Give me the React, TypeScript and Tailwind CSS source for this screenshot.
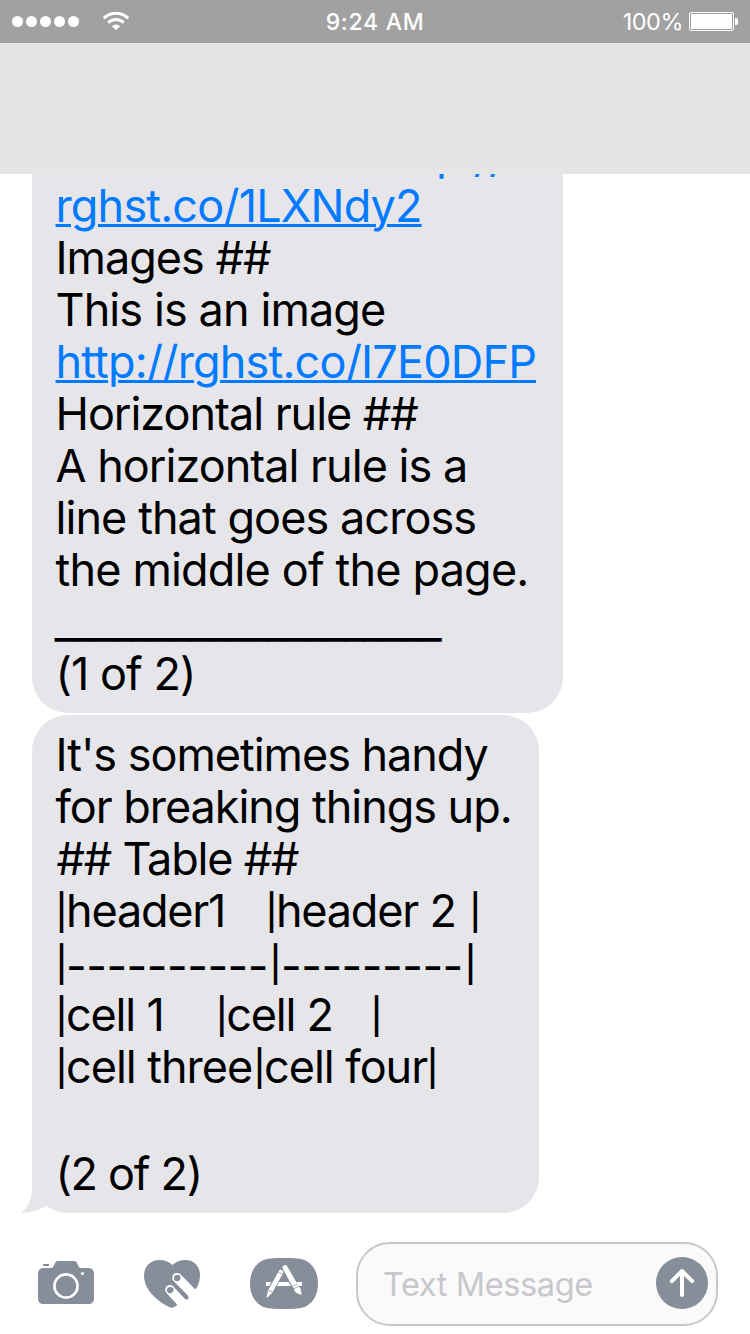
import type { ReactNode } from "react";

function Line({ children, tracking = "" }: { children?: ReactNode; tracking?: string }) {
  return <div className={`h-[52px] whitespace-pre ${tracking}`}>{children}</div>;
}

function Bar() {
  return <span className="inline-block w-[11.5px] align-[2px] text-[35px] font-medium leading-none tracking-normal">|</span>;
}

function Cell({ children, className }: { children: ReactNode; className: string }) {
  return (
    <span className={`inline-block whitespace-pre ${className}`}>
      <Bar />
      {children}
    </span>
  );
}

function StatusBar() {
  return (
    <header className="grid h-[43px] shrink-0 grid-cols-[1fr_auto_1fr] items-center bg-[#a1a1a1] text-white">
      <div className="flex items-center pl-3">
        <div className="flex gap-[3px]">
          {[0, 1, 2, 3, 4].map((i) => (
            <span key={i} className="size-[11px] rounded-full bg-white" />
          ))}
        </div>
        <svg className="ml-[23px] h-[20px] w-[28px]" viewBox="0 0 28 20" fill="none" stroke="#fff">
          <path d="M1.800 6.300a17.500 17.500 0 0 1 24.400 0" strokeWidth="3" />
          <path d="M6.200 10.700a11.200 11.200 0 0 1 15.600 0" strokeWidth="3" />
          <path d="M14 18.300 9.800 14.200a6 6 0 0 1 8.400 0Z" fill="#fff" stroke="none" />
        </svg>
      </div>
      <span className="pt-[2px] text-[23px] font-medium leading-[41px] tracking-[0.7px]">9:24 AM</span>
      <div className="flex items-center justify-end pr-3">
        <span className="mr-[6px] text-[23.5px] leading-[43px] tracking-[-0.5px]">100%</span>
        <div className="h-[19px] w-[45px] rounded-[2px] border border-white p-px">
          <div className="h-full w-full bg-white" />
        </div>
        <span className="ml-px h-[7px] w-[3px] rounded-r-[2px] bg-white" />
      </div>
    </header>
  );
}

function CameraIcon() {
  return (
    <svg className="h-[43px] w-[56px]" viewBox="0 0 56 43">
      <path
        fill="#868e99"
        d="M6 7h7c1.500 0 2-.6 2.600-1.900l1.200-2.500C17.700.6 18.700 0 20.500 0h15c1.800 0 2.900.6 3.700 2.600l1.200 2.500C41 6.400 41.500 7 43 7h7c4 0 6 2 6 6v24c0 4-2 6-6 6H6c-4 0-6-2-6-6V13c0-4 2-6 6-6Z"
      />
      <rect x="5" y="3" width="6" height="2" rx=".6" fill="#868e99" />
      <circle cx="28" cy="25" r="11.600" fill="none" stroke="#fff" strokeWidth="2.600" />
      <circle cx="44.500" cy="12.500" r="1.600" fill="#fff" />
    </svg>
  );
}

function HeartIcon() {
  return (
    <svg className="h-[48px] w-[56px]" viewBox="14 20 56 48">
      <path
        fill="#868e99"
        d="M42.500 25C39 21.500 34.500 20 29.500 20 20.500 20 14 26.500 14 35.500 14 50 27 60.500 39 67c2 1.100 3.900 1 5.500 0l3.500-2.500 9-6.500 9.500-10C69 44 70 39.500 70 35 70 26 63.500 20 55.500 20c-5 0-9.500 1.500-13 5Z"
      />
      <g stroke="#fff" strokeWidth="9.600" strokeLinecap="round">
        <path d="m47 37.700 24 24.500" />
        <path d="m40 49.800 18 19.500" />
      </g>
      <path d="m45.600 46.500 11.300 11.400" stroke="#868e99" strokeWidth="3.200" strokeLinecap="round" />
      <path d="M47.500 34.800c-2.200 0-3.600 1.300-3.600 3.200 0 2 1.200 3.200 2.900 3.200 2.400 0 3.700-1.600 3.700-3.500 0-1.700-1.200-2.900-3-2.900Z" fill="#868e99" />
      <path d="M40.400 46.900c-2.200 0-3.600 1.300-3.600 3.200 0 2 1.200 3.200 2.900 3.200 2.400 0 4-1.600 4-3.500 0-1.700-1.500-2.900-3.300-2.900Z" fill="#868e99" />
    </svg>
  );
}

function AppsIcon() {
  return (
    <svg className="h-[51px] w-[68px]" viewBox="0 0 68 51">
      <path
        fill="#868e99"
        d="M34 0c11 0 17 .5 21.500 2.500C63.500 6.500 68 15 68 25.500s-4.500 19-12.500 23C51 50.500 45 51 34 51s-17-.5-21.500-2.500C4.500 44.500 0 36 0 25.500s4.500-19 12.500-23C17 .5 23 0 34 0Z"
      />
      <path d="M16 24h36v4H16z" fill="#fff" />
      <path d="M31 14 19.500 34M35 10.500 48 34" stroke="#868e99" strokeWidth="6.600" />
      <g transform="translate(31.300 13.500) rotate(29)" fill="#fff">
        <path d="M-2.400 1.500v-.8c0-3 4.800-3 4.800 0v.8ZM-2.400 2.200h4.800v20h-4.800ZM-2.400 22.900h4.800L.5 29.500h-1Z" />
      </g>
      <g transform="translate(34 7.600) rotate(-29)" fill="#fff">
        <path d="M-2.500 2.400c0-3.500 5-3.500 5 0l.3 19.800h-5.600ZM-2.700 22.800h5.400v2h-5.400ZM-2.600 25.400h5.200c1.600 3-.3 5.800-1.200 8.600-2.200-1.500-5.600-4.500-4-8.600Z" />
      </g>
    </svg>
  );
}

export default function App() {
  return (
    <div className="flex h-[1334px] w-[750px] flex-col overflow-hidden bg-white font-['Inter','Liberation_Sans',sans-serif]">
      <StatusBar />
      <div className="h-[131px] shrink-0 bg-[#e5e5e5]" />

      <main className="flex h-[1039px] shrink-0 flex-col items-start justify-end gap-[2px] overflow-hidden pl-8 text-[45px] leading-[52px] text-black">
        <section className="w-[531px] shrink-0 rounded-[36px] bg-[#e5e5ea] pb-[13px] pl-[23.500px] pt-3">
          <Line tracking="tracking-[-0.84px]">
            <a className="ml-[328px] text-[#007aff]">http:<span className="-ml-px align-[-2px] leading-none">//</span></a>
          </Line>
          <Line tracking="tracking-[-0.84px]">
            <a className="text-[#007aff] underline decoration-[3px] underline-offset-[2px]">rghst.co/1LXNdy2</a>
          </Line>
          <Line tracking="tracking-[-1px]">Images ##</Line>
          <Line tracking="tracking-[-0.9px]">This is an image</Line>
          <Line tracking="tracking-[-0.82px]">
            <a className="text-[#007aff] underline decoration-[3px] underline-offset-[2px]">http://rghst.co/I7E0DFP</a>
          </Line>
          <Line tracking="tracking-[-1.03px]">Horizontal rule ##</Line>
          <Line tracking="tracking-[-0.98px]">A horizontal rule is a</Line>
          <Line tracking="tracking-[-0.93px]">line that goes across</Line>
          <Line tracking="tracking-[-0.83px]">the middle of the page.</Line>
          <Line tracking="tracking-[-1.22px]"><span className="-ml-px">____________________</span></Line>
          <Line tracking="tracking-[-0.95px]">(1 of 2)</Line>
        </section>

        <section className="relative w-[507px] shrink-0 rounded-[36px] bg-[#e5e5ea] pb-[13px] pl-[23.500px] pt-[14px]">
          <svg className="absolute -left-[11px] bottom-0 h-[48px] w-[26px]" viewBox="0 0 26 48" fill="#e5e5ea">
            <path d="M11 0v20C11 34 8 43 0 47.500 10 48 18.500 45 25.500 40L26 0Z" />
          </svg>
          <Line tracking="tracking-[-1.03px]">It's sometimes handy</Line>
          <Line tracking="tracking-[-1.04px]">for breaking things up.</Line>
          <Line tracking="tracking-[-1.2px]"><span className="ml-px">## Table ##</span></Line>
          <Line tracking="tracking-[-1.2px]">
            <Cell className="w-[209.900px]"><span className="-ml-px">{"header1   "}</span></Cell>
            <Cell className="w-[203.900px]"><span className="-ml-px">{"header 2 "}</span></Cell>
            <Bar />
          </Line>
          <Line tracking="tracking-[-0.5px]">
            <Cell className="w-[214px]"><span className="-ml-px align-[-3px] leading-none">----------</span></Cell>
            <Cell className="w-[195.100px]"><span className="align-[-3px] leading-none">---------</span></Cell>
            <Bar />
          </Line>
          <Line tracking="tracking-[-1.2px]">
            <Cell className="w-[160.200px]"><span className="-ml-px">{"cell 1    "}</span></Cell>
            <Cell className="w-[154.900px]"><span className="-ml-px">{"cell 2   "}</span></Cell>
            <Bar />
          </Line>
          <Line tracking="tracking-[-1.03px]">
            <Cell className="w-[198.100px]"><span className="-ml-px">cell three</span></Cell>
            <Cell className="w-[172.800px]"><span className="-ml-px">cell four</span></Cell>
            <Bar />
          </Line>
          <div className="h-[55px]" />
          <Line tracking="tracking-[-1.3px]">(2 of 2)</Line>
        </section>
      </main>

      <footer className="flex flex-1 items-start pl-[38px] pt-[29px]">
        <div className="pt-[19px]"><CameraIcon /></div>
        <div className="ml-[50px] pt-[18px]"><HeartIcon /></div>
        <div className="ml-[50px] pt-4"><AppsIcon /></div>
        <div className="ml-[38px] flex h-[84px] w-[362px] items-center justify-between rounded-[34px] border-2 border-[#c7c7cc] bg-[#fafafa] pl-[25px] pr-2">
          <span className="pt-[2px] text-[32.500px] leading-[40px] tracking-[-0.4px] text-[#c7c7cc]">Text Message</span>
          <svg className="mb-[2px] size-[52px]" viewBox="0 0 52 52" fill="none">
            <circle cx="26" cy="26" r="26" fill="#868e99" />
            <path d="M26 38V14M15.800 24.200 26 14l10.200 10.200" stroke="#fff" strokeWidth="4" strokeLinecap="round" strokeLinejoin="round" />
          </svg>
        </div>
      </footer>
    </div>
  );
}
